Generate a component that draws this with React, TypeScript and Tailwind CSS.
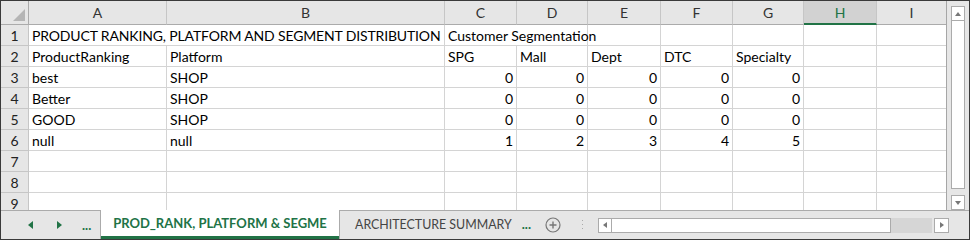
import React from 'react'

const cols = [
  { key: 'A', w: 'w-[138px]' },
  { key: 'B', w: 'w-[278px]' },
  { key: 'C', w: 'w-[72px]' },
  { key: 'D', w: 'w-[71px]' },
  { key: 'E', w: 'w-[73px]' },
  { key: 'F', w: 'w-[72px]' },
  { key: 'G', w: 'w-[71px]' },
  { key: 'H', w: 'w-[73px]' },
  { key: 'I', w: 'w-[70px]' },
]

type Cell = string | number | null

const rows: Cell[][] = [
  ['PRODUCT RANKING, PLATFORM AND SEGMENT DISTRIBUTION', null, 'Customer Segmentation', null, null, null, null, null, null],
  ['ProductRanking', 'Platform', 'SPG', 'Mall', 'Dept', 'DTC', 'Specialty', null, null],
  ['best', 'SHOP', 0, 0, 0, 0, 0, null, null],
  ['Better', 'SHOP', 0, 0, 0, 0, 0, null, null],
  ['GOOD', 'SHOP', 0, 0, 0, 0, 0, null, null],
  ['null', 'null', 1, 2, 3, 4, 5, null, null],
  [null, null, null, null, null, null, null, null, null],
  [null, null, null, null, null, null, null, null, null],
  [null, null, null, null, null, null, null, null, null],
]

const Row: React.FC<{ n: number; cells: Cell[] }> = ({ n, cells }) => {
  return (
    <div className="flex h-[21px] shrink-0">
      <div className="w-[28px] shrink-0 bg-[#e6e6e6] border-r border-b border-[#c6c6c6] flex items-center justify-center text-[#222]">
        {n}
      </div>
      {cols.map((c, i) => {
        const v = cells[i]
        // text in A1 and C1 spills into neighbours, so no right border there
        const spills = n === 1 && (i === 0 || i === 2)
        return (
          <div
            key={c.key}
            className={`${c.w} shrink-0 border-b border-[#d4d4d4] flex items-center whitespace-nowrap ${
              spills ? 'overflow-visible relative z-10' : 'overflow-hidden border-r'
            } ${typeof v === 'number' ? 'justify-end pr-[3px]' : 'pl-[3px]'} ${n === 1 && i === 0 ? 'tracking-[-0.15px]' : ''}`}
          >
            {v}
          </div>
        )
      })}
    </div>
  )
}

const ScrollArrow: React.FC<{ dir: 'up' | 'down' | 'left' | 'right' }> = ({ dir }) => {
  const pts = {
    up: '1,6 4,2 7,6',
    down: '1,2 4,6 7,2',
    left: '6,1 2,4 6,7',
    right: '2,1 6,4 2,7',
  }[dir]
  return (
    <svg width="8" height="8" viewBox="0 0 8 8">
      <polygon points={pts} fill="#777" />
    </svg>
  )
}

export default function App() {
  return (
    <div className="w-[970px] h-[240px] bg-[#e6e6e6] border border-[#3a3a3a] flex flex-col overflow-hidden text-[14px] text-black" style={{ fontFamily: 'Lato, "Liberation Sans", sans-serif' }}>
      <div className="flex h-[209px] shrink-0">
        <div className="w-[946px] shrink-0 flex flex-col overflow-hidden bg-white border-r border-[#a6a6a6]">
          {/* column headers */}
          <div className="flex h-[24px] shrink-0 bg-[#e6e6e6] text-[#333]">
            <div className="w-[28px] shrink-0 border-r border-b border-[#ababab] relative">
              <svg className="absolute right-[3px] bottom-[3px]" width="12" height="12" viewBox="0 0 12 12">
                <polygon points="12,0 12,12 0,12" fill="#b5b5b5" />
              </svg>
            </div>
            {cols.map(c =>
              c.key === 'H' ? (
                <div key={c.key} className={`${c.w} shrink-0 bg-[#d2d2d2] border-r border-[#c6c6c6] border-b-2 border-b-[#217346] flex items-center justify-center text-[#217346]`}>
                  {c.key}
                </div>
              ) : (
                <div key={c.key} className={`${c.w} shrink-0 border-r border-[#c6c6c6] border-b border-b-[#ababab] flex items-center justify-center`}>
                  {c.key}
                </div>
              )
            )}
          </div>
          {rows.map((r, i) => (
            <Row key={i} n={i + 1} cells={r} />
          ))}
        </div>
        {/* vertical scrollbar */}
        <div className="flex-1 flex flex-col items-center pt-[5px]">
          <div className="w-[14px] h-[15px] bg-white border border-[#ababab] flex items-center justify-center">
            <ScrollArrow dir="up" />
          </div>
          <div className="w-[14px] flex-1 bg-white border border-[#ababab] border-t-0 mb-[6px]" />
          <div className="w-[14px] h-[15px] bg-white border border-[#ababab] flex items-center justify-center">
            <ScrollArrow dir="down" />
          </div>
        </div>
      </div>
      {/* sheet tabs */}
      <div className="flex h-[29px] shrink-0 items-stretch">
        <div className="w-[100px] shrink-0 border-t border-r border-[#ababab] flex items-center text-[#217346]">
          <svg className="ml-[27px]" width="6" height="8" viewBox="0 0 6 8">
            <polygon points="5,0 5,8 0,4" fill="#217346" />
          </svg>
          <svg className="ml-[22px]" width="6" height="8" viewBox="0 0 6 8">
            <polygon points="1,0 1,8 6,4" fill="#217346" />
          </svg>
          <span className="ml-[20px] font-bold text-[13px] leading-none">...</span>
        </div>
        <div className="w-[238px] shrink-0 bg-white border-b-[3px] border-[#217346] flex items-center justify-center font-bold text-[#217346] text-[13px] pt-[2px]">
          PROD_RANK, PLATFORM &amp; SEGME
        </div>
        <div className="flex-1 border-t border-l border-[#ababab] flex items-center">
          <span className="ml-[15px] text-[#444] text-[12.4px]">ARCHITECTURE SUMMARY</span>
          <span className="ml-[10px] font-bold text-[#217346] text-[13px]">...</span>
          <svg className="ml-[14px]" width="16" height="16" viewBox="0 0 16 16">
            <circle cx="8" cy="8" r="7" fill="none" stroke="#777" strokeWidth="1.2" />
            <path d="M8 4.5v7M4.5 8h7" stroke="#777" strokeWidth="1.4" />
          </svg>
          <svg className="ml-[20px]" width="3" height="12" viewBox="0 0 3 12">
            <rect x="1" y="1" width="1" height="1" fill="#aaa" />
            <rect x="1" y="5" width="1" height="1" fill="#aaa" />
            <rect x="1" y="9" width="1" height="1" fill="#aaa" />
          </svg>
          {/* horizontal scrollbar */}
          <div className="ml-[14px] flex items-center h-[15px]">
            <div className="w-[14px] h-[15px] bg-white border border-[#ababab] flex items-center justify-center">
              <ScrollArrow dir="left" />
            </div>
            <div className="w-[279px] h-[15px] bg-white border border-[#ababab] border-l-0" />
            <div className="w-[41px] h-[15px] bg-[#d6d6d6]" />
            <div className="ml-[2px] w-[15px] h-[15px] bg-white border border-[#ababab] flex items-center justify-center">
              <ScrollArrow dir="right" />
            </div>
          </div>
        </div>
      </div>
    </div>
  )
}
